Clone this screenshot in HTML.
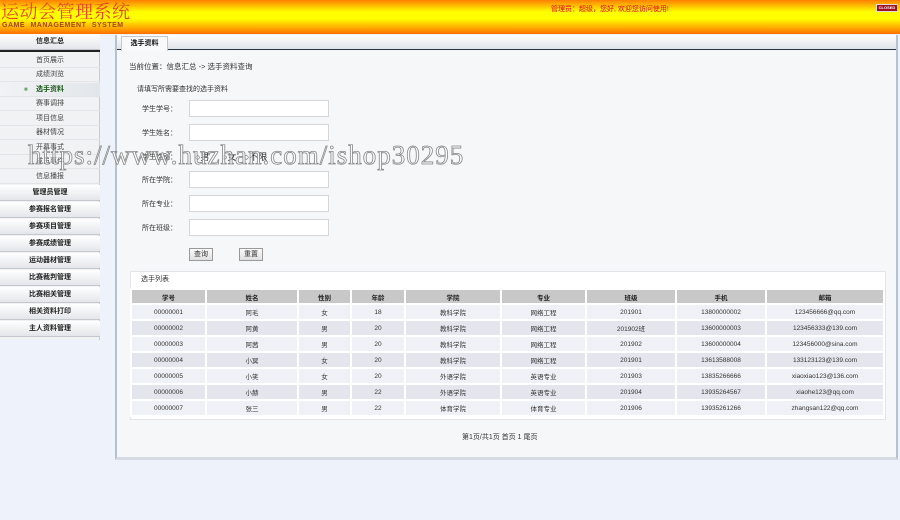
<!DOCTYPE html>
<html><head><meta charset="utf-8"><style>
*{margin:0;padding:0;box-sizing:border-box}
body{width:900px;height:520px;background:#eef2fa;font-family:"Liberation Sans","Noto Sans CJK SC",sans-serif;font-size:7px;color:#333;position:relative;overflow:hidden}
.abs{position:absolute}
#hd{left:0;top:0;width:900px;height:34px;background:linear-gradient(#ff8000 0%,#ffff00 35%,#ffff00 55%,#ff7000 100%)}
#side{left:0;top:34px;width:100px;height:306px;background:#f1f2f4;border-right:1px solid #c8ccd2}
.sh{position:absolute;left:0;width:100px;height:16px;background:linear-gradient(#fff,#e3e6ea);border-bottom:1px solid #c4c8ce;text-align:center;line-height:16px;font-size:7px;font-weight:bold;color:#222}
.si{position:absolute;left:0;width:100px;height:14px;text-align:center;line-height:14px;font-size:7px;color:#444;border-bottom:1px solid #e2e4e8}
#panel{left:115px;top:35px;width:783px;height:425px;background:#f6f7f9;border-left:2px solid #b6c2ce;border-right:2px solid #b6c2ce;border-bottom:3px solid #d5dbe2}
#tabbar{left:117px;top:35px;width:779px;height:15px;background:linear-gradient(#fff,#dfe4ea);border-bottom:1px solid #2a3340}
#tab{left:121px;top:36px;width:47px;height:15px;background:#f8f9fb;border:1px solid #c4c8ce;border-bottom:none;font-weight:bold;text-align:center;line-height:14px;font-size:7px;color:#111}
.lbl{position:absolute;left:142px;font-size:7px;color:#333}
.inp{position:absolute;left:189px;width:140px;height:17px;background:#fff;border:1px solid #d6d6d6}
.btn{position:absolute;top:248px;width:24px;height:13px;background:linear-gradient(#fafafa,#e0e0e0);border:1px solid #999;text-align:center;line-height:11px;font-size:7px}
#list{left:130px;top:271px;width:756px;height:149px;background:#fff;border:1px solid #e2e4e8}
table{position:absolute;left:130px;top:288px;width:755px;border-collapse:collapse;font-size:6.5px}
td,th{border:2px solid #fff;text-align:center;height:16px;padding:0;font-weight:normal}
th{background:#c8c8c8;font-weight:bold;color:#222;height:15px}
tr:nth-child(odd) td{background:#e3e7ed}
tr:nth-child(even) td{background:#eef1f5}
</style></head><body>
<div id="hd" class="abs">
<div class="abs" style="left:1px;top:-2px;font-family:'Noto Serif CJK SC',serif;font-size:18px;color:#e8412a;letter-spacing:0.5px">运动会管理系统</div>
<div class="abs" style="left:2px;top:22px;font-size:7px;font-weight:bold;color:#a04818;letter-spacing:0.5px;word-spacing:3px">GAME MANAGEMENT SYSTEM</div>
<div class="abs" style="left:551px;top:4px;font-size:7px;color:#e0002a">管理员：超级，您好, 欢迎您访问使用!</div>
<div class="abs" style="left:876px;top:4px;width:22px;height:8px;background:#a01020;border:1px solid #ddd;color:#fff;font-size:4px;text-align:center;line-height:6px;font-weight:bold">CLOSED</div>
</div>
<div id="side" class="abs">
<div class="sh" style="top:0">信息汇总</div>
<div class="abs" style="left:0;top:16px;width:100px;height:2px;background:#222"></div>
<div class="si" style="top:20px">首页展示</div>
<div class="si" style="top:34px">成绩浏览</div>
<div class="si" style="top:49px;background:linear-gradient(90deg,#f1f2f4,#e2e6ea);color:#1a5a1a;font-weight:bold"><span style="position:absolute;left:24px;color:#6a6;font-size:6px">■</span>选手资料</div>
<div class="si" style="top:63px">赛事调排</div>
<div class="si" style="top:78px">项目信息</div>
<div class="si" style="top:92px">器材情况</div>
<div class="si" style="top:107px">开幕事式</div>
<div class="si" style="top:121px">成员事件</div>
<div class="si" style="top:136px">信息播报</div>
<div class="sh" style="top:151px">管理员管理</div>
<div class="sh" style="top:168px">参赛报名管理</div>
<div class="sh" style="top:185px">参赛项目管理</div>
<div class="sh" style="top:202px">参赛成绩管理</div>
<div class="sh" style="top:219px">运动器材管理</div>
<div class="sh" style="top:236px">比赛裁判管理</div>
<div class="sh" style="top:253px">比赛相关管理</div>
<div class="sh" style="top:270px">相关资料打印</div>
<div class="sh" style="top:287px">主人资料管理</div>
</div>
<div id="panel" class="abs"></div>
<div id="tabbar" class="abs"></div>
<div id="tab" class="abs">选手资料</div>
<div class="abs" style="left:129px;top:61px;font-size:7.5px;color:#333">当前位置：信息汇总 -&gt; 选手资料查询</div>
<div class="abs" style="left:137px;top:84px;font-size:7px">请填写所需要查找的选手资料</div>
<div class="lbl" style="top:104px">学生学号：</div><div class="inp" style="top:100px"></div>
<div class="lbl" style="top:128px">学生姓名：</div><div class="inp" style="top:124px"></div>
<div class="lbl" style="top:152px">学生性别：</div>
<div class="abs" style="left:195px;top:150px;font-size:9px;color:#222">○男 &nbsp;&nbsp;&nbsp;&nbsp;○女 &nbsp;&nbsp;○不限</div>
<div class="lbl" style="top:175px">所在学院：</div><div class="inp" style="top:171px"></div>
<div class="lbl" style="top:199px">所在专业：</div><div class="inp" style="top:195px"></div>
<div class="lbl" style="top:223px">所在班级：</div><div class="inp" style="top:219px"></div>
<div class="btn" style="left:189px">查询</div>
<div class="btn" style="left:239px">重置</div>
<div id="list" class="abs"></div>
<div class="abs" style="left:141px;top:274px;font-size:7px">选手列表</div>
<table>
<tr><th style="width:75px">学号</th><th style="width:92px">姓名</th><th style="width:53px">性别</th><th style="width:54px">年龄</th><th style="width:96px">学院</th><th style="width:85px">专业</th><th style="width:90px">班级</th><th style="width:90px">手机</th><th>邮箱</th></tr>
<tr><td>00000001</td><td>阿毛</td><td>女</td><td>18</td><td>教科学院</td><td>网络工程</td><td>201901</td><td>13800000002</td><td>123456666@qq.com</td></tr>
<tr><td>00000002</td><td>阿黄</td><td>男</td><td>20</td><td>教科学院</td><td>网络工程</td><td>201902班</td><td>13600000003</td><td>123456333@139.com</td></tr>
<tr><td>00000003</td><td>阿茜</td><td>男</td><td>20</td><td>教科学院</td><td>网络工程</td><td>201902</td><td>13600000004</td><td>123456000@sina.com</td></tr>
<tr><td>00000004</td><td>小冥</td><td>女</td><td>20</td><td>教科学院</td><td>网络工程</td><td>201901</td><td>13613588008</td><td>133123123@139.com</td></tr>
<tr><td>00000005</td><td>小笑</td><td>女</td><td>20</td><td>外语学院</td><td>英语专业</td><td>201903</td><td>13835266666</td><td>xiaoxiao123@136.com</td></tr>
<tr><td>00000006</td><td>小赫</td><td>男</td><td>22</td><td>外语学院</td><td>英语专业</td><td>201904</td><td>13935264567</td><td>xiaohe123@qq.com</td></tr>
<tr><td>00000007</td><td>张三</td><td>男</td><td>22</td><td>体育学院</td><td>体育专业</td><td>201906</td><td>13935261266</td><td>zhangsan122@qq.com</td></tr>
</table>
<div class="abs" style="left:462px;top:432px;font-size:7px">第1页/共1页 首页 1 尾页</div>
<div class="abs" style="left:28px;top:140px;font-family:'Liberation Serif',serif;font-size:27px;color:rgba(255,255,255,0.55);-webkit-text-stroke:0.8px #888;letter-spacing:1px;white-space:nowrap">https://www.huzhan.com/ishop30295</div>
</body></html>
